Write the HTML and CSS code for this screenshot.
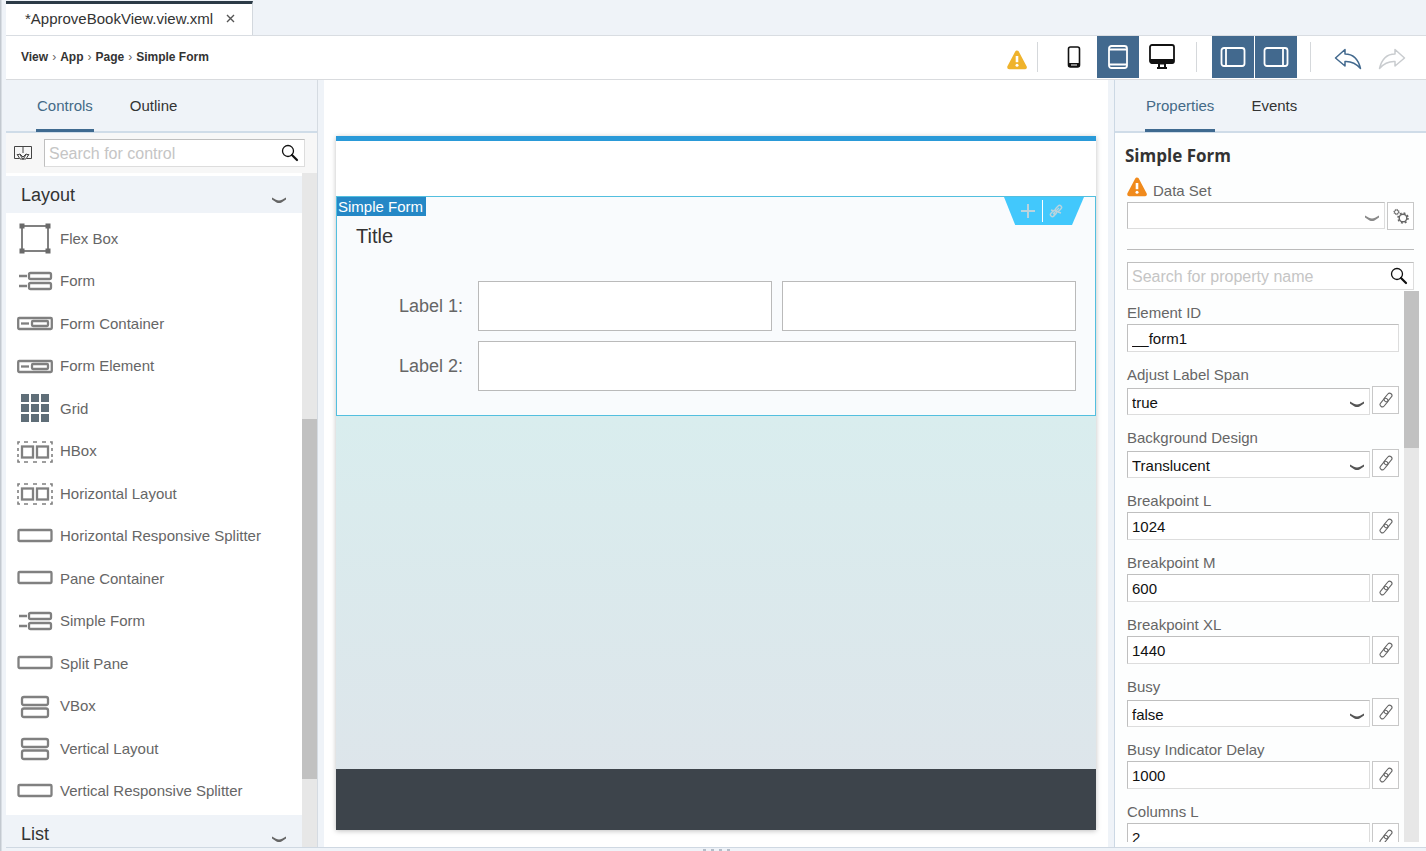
FILE: index.html
```html
<!DOCTYPE html>
<html lang="en">

<head>
    <meta charset="UTF-8">
    <meta name="viewport" content="width=device-width, initial-scale=1.0">
    <title>ApproveBookView.view.xml</title>
    <link rel="stylesheet" href="styles.css">
</head>

<body>
    <!-- shared icons -->
    <svg class="sprite" aria-hidden="true">
        <symbol id="chevron" viewBox="0 0 14 6">
            <path d="M0 .6 L4 2.8 Q7 4 10 2.8 L14 .6 V2.600 L9.500 5.400 Q7 6.400 4.500 5.400 L0 2.600 Z" fill="currentColor" />
        </symbol>
        <symbol id="search" viewBox="0 0 18 18">
            <circle cx="7" cy="7" r="5.500" fill="none" stroke="currentColor" stroke-width="1.300" />
            <path d="M11 11 L16 16" stroke="currentColor" stroke-width="2.200" stroke-linecap="round" />
        </symbol>
        <symbol id="warning" viewBox="0 0 20 20">
            <path d="M10 2.500 L17.800 17.300 H2.200 Z" fill="currentColor" stroke="currentColor" stroke-width="4" stroke-linejoin="round" />
            <path d="M10 6 V12.200" stroke="#fff" stroke-width="2.600" />
            <circle cx="10" cy="15.300" r="1.500" fill="#fff" />
        </symbol>
        <symbol id="link" viewBox="0 0 16 16">
            <g fill="none" stroke="currentColor" stroke-width="1.100">
                <rect x="5.200" y="3.100" width="9.600" height="4.600" rx="2.300" transform="rotate(-50 10 5.400)" />
                <rect x="1.200" y="8.300" width="9.600" height="4.600" rx="2.300" transform="rotate(-50 6 10.600)" />
            </g>
        </symbol>
        <symbol id="flexbox" viewBox="0 0 36 32">
            <rect x="5" y="4" width="26" height="25" fill="none" stroke="currentColor" stroke-width="2" />
            <path d="M2.500 1.500h5v5h-5z M28.500 1.500h5v5h-5z M2.500 26.500h5v5h-5z M28.500 26.500h5v5h-5z" fill="#6a6a6a" />
        </symbol>
        <symbol id="form" viewBox="0 0 36 32">
            <g fill="none" stroke="currentColor" stroke-width="2.300">
                <path d="M2 11h8 M2 21h8" />
                <rect x="12" y="8" width="22" height="6" rx="1.500" />
                <rect x="12" y="18" width="22" height="6" rx="1.500" />
            </g>
        </symbol>
        <symbol id="container" viewBox="0 0 36 32">
            <g fill="none" stroke="currentColor" stroke-width="2.300">
                <rect x="1.200" y="11" width="33.600" height="11" rx="1" />
                <path d="M4 16.500h8" />
                <rect x="15" y="14" width="16" height="5" rx="1" />
            </g>
        </symbol>
        <symbol id="grid" viewBox="0 0 36 32">
            <path d="M4 2h8v8h-8z M14 2h8v8h-8z M24 2h8v8h-8z M4 12h8v8h-8z M14 12h8v8h-8z M24 12h8v8h-8z M4 22h8v8h-8z M14 22h8v8h-8z M24 22h8v8h-8z" fill="#5f6e78" />
        </symbol>
        <symbol id="hbox" viewBox="0 0 36 32">
            <g fill="none" stroke="currentColor">
                <path d="M1 9.500V7H3 M7 7h4 M16 7h4 M25 7h4 M33 7h2v2.500 M35 13v3 M35 19v3 M35 24.500V27h-2 M29 27h-4 M20 27h-4 M11 27h-4 M3 27H1v-2.500 M1 22v-3 M1 16v-3" stroke-width="1.600" />
                <rect x="5" y="11.500" width="11" height="11" stroke-width="2.300" />
                <rect x="20" y="11.500" width="11" height="11" stroke-width="2.300" />
            </g>
        </symbol>
        <symbol id="pane" viewBox="0 0 36 32">
            <rect x="1.500" y="10" width="33" height="11" rx="1" fill="none" stroke="currentColor" stroke-width="2.300" />
        </symbol>
        <symbol id="vbox" viewBox="0 0 36 32">
            <g fill="none" stroke="currentColor" stroke-width="2.300">
                <rect x="5" y="7" width="26" height="8" rx="2" />
                <rect x="5" y="18.500" width="26" height="8.500" rx="2" />
            </g>
        </symbol>
    </svg>

    <header class="file-tabs">
        <div class="file-tab">
            <span>*ApproveBookView.view.xml</span>
            <button class="close" aria-label="Close">
                <svg width="9" height="9" viewBox="0 0 9 9"><path d="M1 1 L8 8 M8 1 L1 8" stroke="#555" stroke-width="1.400" /></svg>
            </button>
        </div>
    </header>

    <div class="toolbar">
        <nav class="breadcrumb">
            <a href="#">View</a><i>›</i><a href="#">App</a><i>›</i><a href="#">Page</a><i>›</i><a href="#">Simple Form</a>
        </nav>
        <svg class="toolbar-warning" width="20" height="20"><use href="#warning" /></svg>
        <span class="sep"></span>
        <div class="btn-group devices">
            <button aria-label="Phone">
                <svg width="14" height="22" viewBox="0 0 14 22">
                    <rect x="1.500" y="1" width="11" height="20" rx="2" fill="none" stroke="#111" stroke-width="1.600" />
                    <path d="M1 17h12v2q0 2-2 2H3q-2 0-2-2z" fill="#111" />
                    <path d="M4 19h6" stroke="#fff" />
                </svg>
            </button>
            <button class="active" aria-label="Tablet">
                <svg width="20" height="24" viewBox="0 0 20 24" fill="none" stroke="#fff" stroke-width="1.800">
                    <rect x="1" y="1" width="18" height="22" rx="2.500" />
                    <path d="M1 4.500h18 M1 19.500h18" />
                </svg>
            </button>
            <button aria-label="Desktop">
                <svg width="26" height="26" viewBox="0 0 26 26">
                    <rect x="1" y="1" width="24" height="18" rx="2" fill="none" stroke="#111" stroke-width="1.800" />
                    <path d="M1 15h24v2q0 2.500-2 2.500H3q-2 0-2-2.500z M9 19h8v4h1v2H8v-2h1z" fill="#111" />
                    <path d="M11 20.500h4v2.500h-4z" fill="#fff" />
                </svg>
            </button>
        </div>
        <span class="sep"></span>
        <div class="btn-group panels">
            <button class="active" aria-label="Toggle left panel">
                <svg width="26" height="20" viewBox="0 0 26 20" fill="none" stroke="#fff" stroke-width="1.800">
                    <rect x="1.500" y="1" width="23" height="18" rx="2.500" />
                    <path d="M6 1v18" />
                </svg>
            </button>
            <button class="active" aria-label="Toggle right panel">
                <svg width="26" height="20" viewBox="0 0 26 20" fill="none" stroke="#fff" stroke-width="1.800">
                    <rect x="1.500" y="1" width="23" height="18" rx="2.500" />
                    <path d="M20 1v18" />
                </svg>
            </button>
        </div>
        <span class="sep"></span>
        <div class="btn-group history">
            <button class="undo" aria-label="Undo">
                <svg width="28" height="22" viewBox="0 0 28 22" fill="none" stroke="currentColor" stroke-width="1.500" stroke-linejoin="round">
                    <path d="M1.500 10 L11 1.500 V6 Q23 6 26.500 20.500 Q20 13 11 13.500 V18 Z" />
                </svg>
            </button>
            <button class="redo" aria-label="Redo" disabled>
                <svg width="28" height="22" viewBox="0 0 28 22" fill="none" stroke="currentColor" stroke-width="1.500" stroke-linejoin="round">
                    <path d="M26.500 10 L17 1.500 V6 Q5 6 1.500 20.500 Q8 13 17 13.500 V18 Z" />
                </svg>
            </button>
        </div>
    </div>

    <main class="workspace">
        <aside class="controls">
            <div class="panel-tabs">
                <button class="selected">Controls</button>
                <button>Outline</button>
            </div>
            <div class="control-search">
                <svg width="18" height="16" viewBox="0 0 18 16" fill="none" stroke="#444">
                    <path d="M9 1.500 H.5 V13.500 H5 M9 1.500 H17.500 V13.500 H13 M9 1 V8 M3 9 L6 14 H12 L15 9 M3 10 L6 9 L9 12 L12 9 L15 10 M6 9.500 L9 14.500 L12 9.500" />
                </svg>
                <div class="search-box">
                    <input type="text" placeholder="Search for control" aria-label="Search for control">
                    <svg width="18" height="18"><use href="#search" /></svg>
                </div>
            </div>
            <div class="control-scroll">
                <div class="control-list">
                    <button class="group">Layout <svg width="14" height="6"><use href="#chevron" /></svg></button>
                    <ul>
                        <li><svg><use href="#flexbox" /></svg>Flex Box</li>
                        <li><svg><use href="#form" /></svg>Form</li>
                        <li><svg><use href="#container" /></svg>Form Container</li>
                        <li><svg><use href="#container" /></svg>Form Element</li>
                        <li><svg><use href="#grid" /></svg>Grid</li>
                        <li><svg><use href="#hbox" /></svg>HBox</li>
                        <li><svg><use href="#hbox" /></svg>Horizontal Layout</li>
                        <li><svg><use href="#pane" /></svg>Horizontal Responsive Splitter</li>
                        <li><svg><use href="#pane" /></svg>Pane Container</li>
                        <li><svg><use href="#form" /></svg>Simple Form</li>
                        <li><svg><use href="#pane" /></svg>Split Pane</li>
                        <li><svg><use href="#vbox" /></svg>VBox</li>
                        <li><svg><use href="#vbox" /></svg>Vertical Layout</li>
                        <li><svg><use href="#pane" /></svg>Vertical Responsive Splitter</li>
                    </ul>
                    <button class="group">List <svg width="14" height="6"><use href="#chevron" /></svg></button>
                </div>
                <div class="scrollbar left-bar"><div class="thumb"></div></div>
            </div>
        </aside>

        <section class="canvas">
            <div class="page">
                <div class="page-header"></div>
                <div class="simple-form">
                    <span class="tag">Simple Form</span>
                    <div class="actions">
                        <button aria-label="Add">
                            <svg width="14" height="14" viewBox="0 0 14 14"><path d="M7 0v14 M0 7h14" stroke="#b9d3dd" stroke-width="2" /></svg>
                        </button>
                        <button aria-label="Unbind">
                            <svg width="16" height="16" viewBox="0 0 16 16" fill="none" stroke="currentColor" stroke-width="1.400">
                                <rect x="7" y="3.500" width="7" height="4" rx="2" transform="rotate(-45 10.500 5.500)" />
                                <rect x="2" y="8.500" width="7" height="4" rx="2" transform="rotate(-45 5.500 10.500)" />
                                <path d="M3 7l3 1 M6 13l1-3 M10 9l3 1 M5 11l6-6" />
                            </svg>
                        </button>
                    </div>
                    <h2>Title</h2>
                    <div class="form-row">
                        <label for="f1">Label 1:</label>
                        <div class="inputs">
                            <input type="text" id="f1">
                            <input type="text" aria-label="Label 1 second value">
                        </div>
                    </div>
                    <div class="form-row">
                        <label for="f2">Label 2:</label>
                        <div class="inputs">
                            <input type="text" id="f2">
                        </div>
                    </div>
                </div>
                <div class="page-content"></div>
                <div class="page-footer"></div>
            </div>
        </section>

        <aside class="properties">
            <div class="panel-tabs">
                <button class="selected">Properties</button>
                <button>Events</button>
            </div>
            <div class="element">
                <h1>Simple Form</h1>
                <div class="data-set-label">
                    <svg width="20" height="20"><use href="#warning" /></svg>
                    <label for="dataset">Data Set</label>
                </div>
                <div class="row data-set">
                    <div class="select">
                        <select id="dataset"><option></option></select>
                        <svg width="14" height="6"><use href="#chevron" /></svg>
                    </div>
                    <button class="square" aria-label="Settings">
                        <svg width="18" height="18" viewBox="0 0 18 18" fill="none" stroke="currentColor">
                            <circle cx="11" cy="11" r="3.800" stroke-width="1.400" />
                            <circle cx="11" cy="11" r="5" stroke-width="1.600" stroke-dasharray="1.900 2.027" />
                            <circle cx="4.500" cy="5" r="2" />
                            <circle cx="4.500" cy="5" r="2.700" stroke-dasharray="1 1.120" />
                        </svg>
                    </button>
                </div>
                <div class="search-box">
                    <input type="text" placeholder="Search for property name" aria-label="Search for property name">
                    <svg width="18" height="18"><use href="#search" /></svg>
                </div>
            </div>
            <div class="property-scroll">
                <form class="property-list">
                    <div class="field">
                        <label for="p1">Element ID</label>
                        <div class="row"><input type="text" id="p1" value="__form1"></div>
                    </div>
                    <div class="field">
                        <label for="p2">Adjust Label Span</label>
                        <div class="row">
                            <div class="select">
                                <select id="p2"><option>true</option><option>false</option></select>
                                <svg width="14" height="6"><use href="#chevron" /></svg>
                            </div>
                            <button type="button" class="square" aria-label="Bind"><svg width="16" height="16"><use href="#link" /></svg></button>
                        </div>
                    </div>
                    <div class="field">
                        <label for="p3">Background Design</label>
                        <div class="row">
                            <div class="select">
                                <select id="p3"><option>Translucent</option></select>
                                <svg width="14" height="6"><use href="#chevron" /></svg>
                            </div>
                            <button type="button" class="square" aria-label="Bind"><svg width="16" height="16"><use href="#link" /></svg></button>
                        </div>
                    </div>
                    <div class="field">
                        <label for="p4">Breakpoint L</label>
                        <div class="row">
                            <input type="text" id="p4" value="1024">
                            <button type="button" class="square" aria-label="Bind"><svg width="16" height="16"><use href="#link" /></svg></button>
                        </div>
                    </div>
                    <div class="field">
                        <label for="p5">Breakpoint M</label>
                        <div class="row">
                            <input type="text" id="p5" value="600">
                            <button type="button" class="square" aria-label="Bind"><svg width="16" height="16"><use href="#link" /></svg></button>
                        </div>
                    </div>
                    <div class="field">
                        <label for="p6">Breakpoint XL</label>
                        <div class="row">
                            <input type="text" id="p6" value="1440">
                            <button type="button" class="square" aria-label="Bind"><svg width="16" height="16"><use href="#link" /></svg></button>
                        </div>
                    </div>
                    <div class="field">
                        <label for="p7">Busy</label>
                        <div class="row">
                            <div class="select">
                                <select id="p7"><option>false</option><option>true</option></select>
                                <svg width="14" height="6"><use href="#chevron" /></svg>
                            </div>
                            <button type="button" class="square" aria-label="Bind"><svg width="16" height="16"><use href="#link" /></svg></button>
                        </div>
                    </div>
                    <div class="field">
                        <label for="p8">Busy Indicator Delay</label>
                        <div class="row">
                            <input type="text" id="p8" value="1000">
                            <button type="button" class="square" aria-label="Bind"><svg width="16" height="16"><use href="#link" /></svg></button>
                        </div>
                    </div>
                    <div class="field">
                        <label for="p9">Columns L</label>
                        <div class="row">
                            <input type="text" id="p9" value="2">
                            <button type="button" class="square" aria-label="Bind"><svg width="16" height="16"><use href="#link" /></svg></button>
                        </div>
                    </div>
                </form>
                <div class="scrollbar right-bar"><div class="thumb"></div></div>
            </div>
        </aside>
    </main>

    <footer class="bottom-split"><i></i><i></i><i></i><i></i></footer>
</body>

</html>
```
FILE: styles.css
```css
* {
    box-sizing: border-box;
}

body {
    margin: 0;
    height: 100vh;
    display: flex;
    flex-direction: column;
    overflow: hidden;
    padding-left: 6px;
    font-family: "Liberation Sans", Arial, sans-serif;
    font-size: 15px;
    color: #333;
    background: linear-gradient(to right, #c3c9d0 1px, #eff3f8 2px);
}

button,
input,
select {
    font: inherit;
    color: inherit;
    margin: 0;
}

button {
    display: flex;
    align-items: center;
    justify-content: center;
    padding: 0;
    border: 0;
    background: none;
}

svg {
    flex: none;
    display: block;
}

.sprite {
    position: absolute;
    width: 0;
    height: 0;
}

/* file tabs */
.file-tabs {
    flex: none;
    display: flex;
    height: 36px;
    padding-top: 1px;
    border-bottom: 1px solid #d9dde2;
    background: #eff3f8;
}

.file-tab {
    display: flex;
    align-items: center;
    gap: 13px;
    padding: 0 17px 2px 19px;
    border-top: 3px solid #2c3b47;
    border-right: 1px solid #d3d8de;
    background: #fff;
}

/* toolbar */
.toolbar {
    flex: none;
    display: flex;
    align-items: center;
    height: 44px;
    padding: 0 13px 1px 15px;
    border-bottom: 1px solid #d9dbde;
    background: #fff;
}

.breadcrumb {
    display: flex;
    align-items: center;
    gap: 4px;
    margin-right: auto;
    font-size: 12px;
    font-weight: bold;
}

.breadcrumb a {
    color: #333;
    text-decoration: none;
}

.breadcrumb i {
    font-style: normal;
    font-weight: normal;
    color: #666;
}

.toolbar-warning {
    margin-top: 5px;
    color: #efb32c;
}

.sep {
    width: 1px;
    height: 30px;
    margin: 0 15px 0 10px;
    background: #d5d8db;
}

.btn-group {
    display: flex;
    gap: 2px;
    padding-right: 3px;
}

.btn-group button {
    width: 42px;
    height: 42px;
}

.panels {
    gap: 1px;
}

.history {
    padding: 0 0 0 1px;
}

.btn-group .active {
    background: #42698e;
}

.history button {
    padding-top: 4px;
}

.undo {
    color: #42698e;
}

.redo {
    color: #c9cccf;
}

.workspace {
    flex: 1;
    min-height: 0;
    display: flex;
}

/* side panels */
.controls,
.properties {
    flex: none;
    display: flex;
    flex-direction: column;
    width: 312px;
    min-height: 0;
    background: #fff;
}

.controls {
    border-right: 1px solid #d5dbe2;
}

.properties {
    border-left: 1px solid #ccd8e4;
    background: #fdfefe;
}

.panel-tabs {
    flex: none;
    display: flex;
    gap: 35px;
    height: 53px;
    padding: 0 30px;
    border-bottom: 2px solid #cfdce8;
    background: #eff3f8;
}

.panel-tabs button {
    height: 52px;
    padding: 1px 1px 0;
    border-bottom: 3px solid transparent;
}

.panel-tabs .selected {
    color: #446a87;
    border-color: #3f6a90;
}

.control-search {
    flex: none;
    display: flex;
    align-items: center;
    gap: 12px;
    height: 40px;
    padding: 0 12px 0 8px;
    background: #f7f7f7;
}

.search-box {
    flex: 1;
    display: flex;
    align-items: center;
    height: 28px;
    padding: 0 5px 0 0;
    border: 1px solid #ddd;
    border-top-color: #bfbfbf;
    border-left-color: #bfbfbf;
    background: #fff;
    color: #111;
}

.search-box input {
    flex: 1;
    min-width: 0;
    padding: 2px 0 0 4px;
    border: 0;
    background: none;
    font-size: 16px;
    outline: 0;
}

.search-box input::placeholder {
    color: #c5c5c5;
}

.control-scroll,
.property-scroll {
    flex: 1;
    min-height: 0;
    display: flex;
    overflow: hidden;
}

.control-list {
    flex: 1;
    padding-top: 3px;
}

.group {
    width: 100%;
    height: 37px;
    padding: 1px 16px 0 15px;
    justify-content: space-between;
    font-size: 18px;
    background: #eff3f8;
}

.group svg {
    margin-top: 9px;
    color: #666;
}

.control-list ul {
    list-style: none;
    margin: 0;
    padding: 4px 0 3px 11px;
}

.control-list li {
    display: flex;
    align-items: center;
    gap: 7px;
    height: 42px;
    color: #666;
}

.control-list li:nth-child(even) {
    height: 43px;
}

.control-list li svg {
    width: 36px;
    height: 32px;
    color: #808080;
}

.scrollbar {
    flex: none;
    width: 15px;
    background: #e7e7e7;
}

.thumb {
    background: #c1c1c1;
}

.left-bar {
    padding-top: 246px;
}

.left-bar .thumb {
    height: 360px;
}

.right-bar .thumb {
    height: 157px;
}

/* design canvas */
.canvas {
    flex: 1;
    min-width: 0;
    display: flex;
    padding: 56px 12px 17px;
    margin: 0 6px;
    background: #fff;
}

.page {
    flex: 1;
    display: flex;
    flex-direction: column;
    border-top: 5px solid #2a9ad8;
    box-shadow: 0 1px 5px rgba(0, 0, 0, 0.25);
    background: linear-gradient(to bottom, #d9edee 40%, #dee4ea);
}

.page-header {
    height: 55px;
    background: #fff;
}

.simple-form {
    position: relative;
    display: flex;
    flex-direction: column;
    gap: 10px;
    padding: 24px 19px;
    border: 1px solid #53bfdf;
    background: #f9fbfd;
}

.tag {
    position: absolute;
    top: 0;
    left: 0;
    padding: 1px 3px 1px 1px;
    line-height: 17px;
    color: #fff;
    background: #2588c6;
}

.actions {
    position: absolute;
    top: 0;
    right: 11px;
    display: flex;
    width: 80px;
    height: 28px;
    padding: 3px 11px 3px 8px;
    color: #b9d3dd;
    background: #42c8fc;
    clip-path: polygon(0 0, 100% 0, 85% 100%, 14% 100%);
}

.actions button {
    flex: 1;
    padding-left: 2px;
}

.actions button + button {
    padding: 0 3px 0 0;
    border-left: 1px solid #fff;
}

.simple-form h2 {
    margin: 0;
    height: 50px;
    line-height: 31px;
    font-size: 20px;
    font-weight: normal;
}

.form-row {
    display: flex;
    align-items: center;
}

.form-row label {
    width: 122px;
    padding-right: 15px;
    text-align: right;
    font-size: 18px;
    color: #666;
}

.inputs {
    flex: 1;
    display: flex;
    gap: 10px;
}

.inputs input {
    flex: 1;
    min-width: 0;
    height: 50px;
    padding: 0 12px;
    border: 1px solid #bababa;
    background: #fff;
}

.page-content {
    flex: 1;
}

.page-footer {
    height: 61px;
    background: #3d444b;
}

/* properties */
.element {
    padding: 12px 12px 0;
}

.element h1 {
    margin: 0 0 8px -2px;
    line-height: 22px;
    font-family: "Open Sans", "Noto Sans", sans-serif;
    font-size: 17px;
    font-weight: 700;
}

.data-set-label {
    display: flex;
    align-items: flex-start;
    gap: 6px;
    height: 27px;
    padding-top: 2px;
    color: #f08a1c;
}

.data-set-label label {
    padding-top: 5px;
}

.properties label {
    display: block;
    line-height: 17px;
    color: #666;
}

.row {
    display: flex;
    align-items: flex-start;
    gap: 2px;
}

.data-set {
    height: 48px;
    margin-bottom: 12px;
    border-bottom: 1px solid #bbb;
    color: #777;
}

.row > input,
.select select {
    flex: 1;
    min-width: 0;
    width: 100%;
    height: 28px;
    padding: 0 4px;
    border: 1px solid #ddd;
    border-top-color: #bfbfbf;
    border-left-color: #bfbfbf;
    background: #fff;
    color: #111;
}

.select {
    position: relative;
    flex: 1;
    color: #555;
}

.select select {
    display: block;
    height: 27px;
    padding-top: 2px;
    appearance: none;
}

.select svg {
    position: absolute;
    right: 6px;
    bottom: 8px;
    pointer-events: none;
}

.data-set .select {
    color: #8a8a8a;
}

.square {
    flex: none;
    width: 27px;
    height: 28px;
    border: 1px solid #c8c8c8;
    background: #fff;
    color: #666;
}

.property-list {
    flex: 1;
    display: flex;
    flex-direction: column;
    gap: 14px;
    padding: 13px 5px 0 12px;
}

.property-list .select {
    padding-top: 2px;
}

.field label {
    margin-bottom: 3px;
}

.property-scroll {
    margin: 1px 7px 5px 0;
}

/* bottom splitter */
.bottom-split {
    flex: none;
    display: flex;
    align-items: flex-end;
    justify-content: center;
    gap: 5px;
    height: 4px;
    border-top: 1px solid #cfd8e2;
}

.bottom-split i {
    width: 3px;
    height: 2px;
    background: #b4bdc8;
}
```
